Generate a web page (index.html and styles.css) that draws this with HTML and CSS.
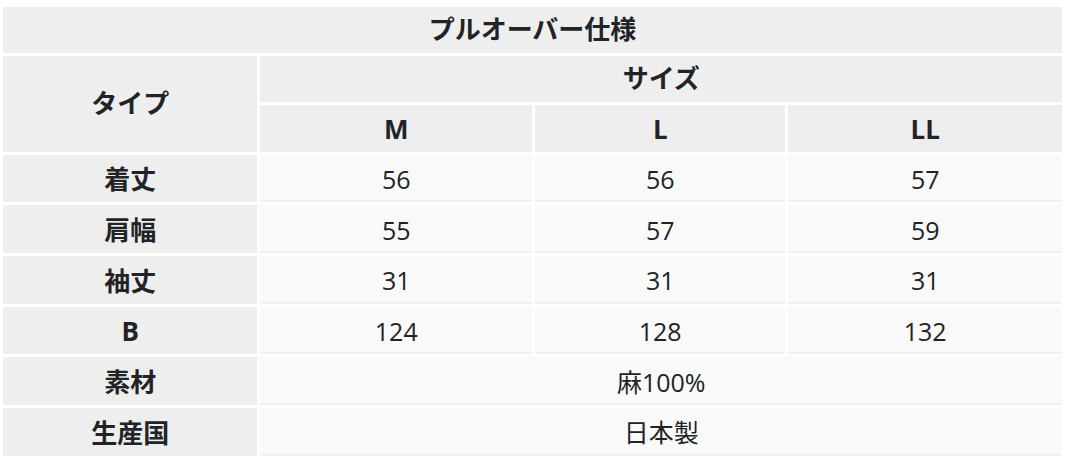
FILE: index.html
```html
<!DOCTYPE html>
<html lang="ja">
<head>
<meta charset="utf-8">
<link rel="stylesheet" href="styles.css">
</head>
<body>
<table class="spec">
  <colgroup>
    <col class="c-label">
    <col class="c-m">
    <col class="c-l">
    <col class="c-ll">
  </colgroup>
  <thead>
    <tr class="r-title"><th colspan="4">プルオーバー仕様</th></tr>
    <tr class="r-size"><th rowspan="2">タイプ</th><th colspan="3">サイズ</th></tr>
    <tr class="r-cols"><th>M</th><th>L</th><th>LL</th></tr>
  </thead>
  <tbody>
    <tr><th>着丈</th><td>56</td><td>56</td><td>57</td></tr>
    <tr><th>肩幅</th><td>55</td><td>57</td><td>59</td></tr>
    <tr><th>袖丈</th><td>31</td><td>31</td><td>31</td></tr>
    <tr><th>B</th><td>124</td><td>128</td><td>132</td></tr>
    <tr><th>素材</th><td colspan="3">麻100%</td></tr>
    <tr><th>生産国</th><td colspan="3">日本製</td></tr>
  </tbody>
</table>
</body>
</html>
```
FILE: styles.css
```css
html, body {
  margin: 0;
  padding: 0;
  background: #ffffff;
}

.spec {
  width: 1065px;
  margin-top: 3.5px;
  border-collapse: separate;
  border-spacing: 3.5px;
  table-layout: fixed;
  font-family: "Open Sans", "Noto Sans CJK JP", sans-serif;
  color: #222326;
}

.c-label { width: 254px; }
.c-m { width: 271px; }
.c-l { width: 250px; }
.c-ll { width: 273px; }

.spec th,
.spec td {
  box-sizing: border-box;
  padding: 0;
  text-align: center;
  vertical-align: middle;
  line-height: 1.2;
  height: 47.7px;
}

.spec th {
  background: #eeeeee;
  font-weight: 700;
  font-size: 26px;
}

.r-title th,
.r-size th { height: 46px; }
.r-cols th {
  height: 47px;
  padding-top: 3px;
}

.spec tbody th,
.spec tbody td {
  padding-top: 3px;
}

.spec td {
  background: #f9f9f9;
  font-weight: 400;
  font-size: 25px;
  border-bottom: 2px solid #f0f0f0;
}
```
